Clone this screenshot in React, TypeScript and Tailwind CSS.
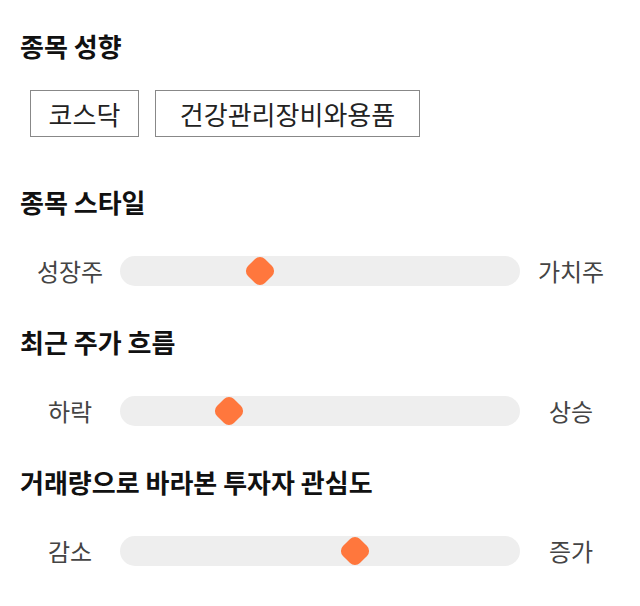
import React from "react";

const font = { fontFamily: '"Noto Sans CJK KR", "Noto Sans", sans-serif' };

function Heading({ children, className = "" }: { children: React.ReactNode; className?: string }) {
  return (
    <h2 className={`text-[26px] leading-[32px] font-bold text-[#111111] ${className}`}>{children}</h2>
  );
}

function Slider({ left, right, value, className = "" }: { left: string; right: string; value: number; className?: string }) {
  return (
    <div className={`flex items-center h-[30px] ${className}`}>
      <div className="w-[100px] text-center text-[24px] leading-[30px] text-[#444444]">{left}</div>
      <div className="relative flex-1 h-[30px] rounded-full bg-[#eeeeee] mr-[2px]">
        <div
          className="absolute top-1/2 w-[24px] h-[24px] -translate-x-1/2 -translate-y-1/2 rotate-45 rounded-[7px] bg-[#ff773d]"
          style={{ left: `${value * 100}%` }}
        />
      </div>
      <div className="w-[98px] text-center text-[24px] leading-[30px] text-[#444444]">{right}</div>
    </div>
  );
}

export default function App() {
  return (
    <div className="w-[640px] h-[606px] bg-white px-5 pt-[30px]" style={font}>
      <Heading>종목 성향</Heading>
      <div className="flex gap-[16px] mt-[28px] pl-[10px]">
        <div className="h-[47px] w-[109px] flex items-center justify-center border border-[#888888] text-[26px] text-[#222222]">
          코스닥
        </div>
        <div className="h-[47px] w-[265px] flex items-center justify-center border border-[#888888] text-[26px] text-[#222222]">
          건강관리장비와용품
        </div>
      </div>
      <Heading className="mt-[49px]">종목 스타일</Heading>
      <Slider className="mt-[38px]" left="성장주" right="가치주" value={0.35} />
      <Heading className="mt-[40px]">최근 주가 흐름</Heading>
      <Slider className="mt-[38px]" left="하락" right="상승" value={0.2725} />
      <Heading className="mt-[40px]">거래량으로 바라본 투자자 관심도</Heading>
      <Slider className="mt-[38px]" left="감소" right="증가" value={0.5875} />
    </div>
  );
}
